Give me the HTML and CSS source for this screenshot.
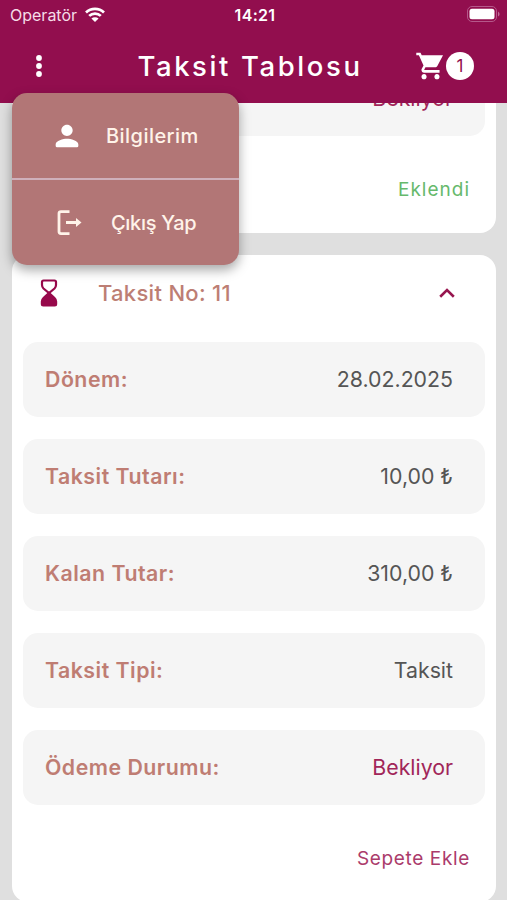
FILE: index.html
```html
<!DOCTYPE html>
<html lang="tr">
<head>
<meta charset="utf-8">
<title>Taksit Tablosu</title>
<link rel="stylesheet" href="styles.css">
</head>
<body>
<header class="header">
  <div class="status">
    <div class="carrier"><span>Operatör</span>
      <svg width="20" height="15" viewBox="0 0 20 15" fill="none" stroke="#fff" stroke-width="2.7"><path d="M1 5.500a13 13 0 0 1 18 0M4.200 8.900a8.300 8.300 0 0 1 11.600 0"/><path d="M6.400 11.600a5.200 5.200 0 0 1 7.200 0L10 15z" fill="#fff" stroke="none"/></svg>
    </div>
    <time class="clock">14:21</time>
    <svg class="battery" width="33" height="16" viewBox="0 0 33 16"><rect x=".5" y=".5" width="29" height="15" rx="4.5" fill="none" stroke="#b5588a"/><rect x="2.500" y="2.800" width="25" height="10.400" rx="2.500" fill="#fff"/><path d="M31 5.500q1.600 1 1.600 2.500T31 10.500z" fill="#c06c98"/></svg>
  </div>
  <div class="toolbar">
    <svg class="dots" width="8" height="24" viewBox="0 0 8 24" fill="#fff"><circle cx="4" cy="4" r="2.9"/><circle cx="4" cy="12" r="2.9"/><circle cx="4" cy="20" r="2.9"/></svg>
    <h1 class="title">Taksit Tablosu</h1>
    <div class="cart">
      <svg width="31" height="32" viewBox="0 0 24 24" preserveAspectRatio="none" fill="#fff"><path d="M7 18c-1.100 0-1.990.9-1.990 2S5.900 22 7 22s2-.9 2-2-.9-2-2-2zM1 2v2h2l3.600 7.590-1.350 2.450c-.16.28-.25.61-.25.96 0 1.100.9 2 2 2h12v-2H7.420c-.14 0-.25-.11-.25-.25l.03-.12.9-1.630h7.450c.75 0 1.410-.41 1.750-1.030L21.700 4H5.210l-.94-2H1zm16 16c-1.100 0-1.990.9-1.990 2s.89 2 1.990 2 2-.9 2-2-.9-2-2-2z"/></svg>
      <span class="count">1</span>
    </div>
  </div>
</header>
<nav class="menu">
  <a class="menu-item"><svg width="34" height="34" viewBox="0 0 24 24" fill="#fff"><path d="M12 12c2.210 0 4-1.790 4-4s-1.790-4-4-4-4 1.790-4 4 1.790 4 4 4zm0 2c-2.670 0-8 1.340-8 4v1q0 1 1 1h14q1 0 1-1v-1c0-2.660-5.330-4-8-4z"/></svg><span class="profile">Bilgilerim</span></a>
  <a class="menu-item"><svg width="34" height="34" viewBox="0 0 34 34" fill="none" stroke="#fff3e9" stroke-width="2.8"><path d="M19.500 5.600H11q-2 0-2 2V25.600q0 2 2 2h8.500M16 16.500H27"/><path d="M26 12l5.500 4.500-5.500 4.500z" fill="#fff3e9" stroke="none"/></svg><span class="logout">Çıkış Yap</span></a>
</nav>
<main class="list">
  <section class="card clipped">
    <div class="row"><b>Ödeme Durumu:</b><span class="pending">Bekliyor</span></div>
    <footer class="action added">Eklendi</footer>
  </section>
  <section class="card">
    <div class="card-head">
      <svg width="18" height="28" viewBox="0 0 18 28"><path d="M3.500 1.500h11q1.500 0 1.500 1.500v3q0 2-1.500 3.500L9 14 3.500 9.500Q2 8 2 6V3q0-1.500 1.500-1.500z" fill="none" stroke="#97094b" stroke-width="2.2"/><path d="M9 12.500l6 5.500q2.200 2 2.200 4.500V25q0 2.500-2.500 2.500H3.300Q.8 27.500.8 25v-2.500Q.8 20 3 18z" fill="#97094b"/></svg>
      <h2>Taksit No: 11</h2>
      <svg class="chevron" width="16" height="10" viewBox="0 0 16 10" fill="none" stroke="#97164f" stroke-width="2.600"><path d="M1.200 8.700L8 2l6.800 6.700"/></svg>
    </div>
    <div class="row"><b>Dönem:</b><span>28.02.2025</span></div>
    <div class="row"><b>Taksit Tutarı:</b><span>10,00 ₺</span></div>
    <div class="row"><b>Kalan Tutar:</b><span>310,00 ₺</span></div>
    <div class="row"><b>Taksit Tipi:</b><span>Taksit</span></div>
    <div class="row"><b>Ödeme Durumu:</b><span class="pending">Bekliyor</span></div>
    <footer class="action">Sepete Ekle</footer>
  </section>
</main>
</body>
</html>
```
FILE: styles.css
```css
* { box-sizing: border-box; }
body {
  margin: 0;
  height: 900px;
  overflow: hidden;
  position: relative;
  background: #dfdfdf;
  font-family: Inter, "Liberation Sans", sans-serif;
  display: flex;
  flex-direction: column;
}
svg { display: block; flex: none; }
.header { height: 103px; flex: none; background: #920e4e; color: #fff; }
.status {
  height: 29px;
  padding: 0 7px 0 10px;
  display: grid;
  grid-template-columns: 1fr auto 1fr;
  align-items: center;
}
.carrier { display: flex; align-items: center; gap: 8px; font-size: 16px; color: #f5dce8; }
.clock { font-size: 16px; font-weight: 600; letter-spacing: .3px; }
.battery { justify-self: end; margin-top: -2px; }
.toolbar {
  height: 74px;
  padding: 0 33px 0 35px;
  display: flex;
  align-items: center;
  justify-content: space-between;
}
.title { margin: 0 0 0 42px; font-size: 27.500px; font-weight: 500; letter-spacing: 2.6px; white-space: nowrap; }
.cart { display: flex; align-items: center; }
.count {
  width: 28px;
  height: 28px;
  border-radius: 50%;
  background: #fff;
  color: #920e4e;
  font-size: 17px;
  line-height: 28px;
  text-align: center;
}
.menu {
  position: absolute;
  z-index: 2;
  left: 12px;
  top: 93px;
  width: 227px;
  height: 172px;
  border-radius: 15px;
  overflow: hidden;
  background: #b27676;
  box-shadow: 0 5px 12px rgba(0, 0, 0, .35);
}
.menu-item {
  height: 85px;
  padding-left: 38px;
  display: flex;
  align-items: center;
  color: #fff3e9;
  font-size: 20px;
  font-weight: 500;
}
.menu-item + .menu-item { height: 87px; border-top: 2px solid #cfb0bb; }
.profile { margin-left: 22px; letter-spacing: .45px; }
.logout { margin-left: 27px; letter-spacing: -.3px; }
.list { flex: 1; min-height: 0; overflow: hidden; padding: 0 11px 0 12px; }
.card {
  padding: 0 11px;
  border-radius: 16px;
  background: #fff;
  display: flex;
  flex-direction: column;
  gap: 22px;
  margin-bottom: 22px;
}
.clipped { margin-top: -53px; padding-top: 11px; }
.card-head {
  height: 65px;
  padding: 11px 30px 0 17px;
  display: flex;
  align-items: center;
}
.card-head h2 { margin: 0 0 0 40px; color: #bd7e74; font-size: 22px; font-weight: 500; letter-spacing: .3px; }
.chevron { margin-left: auto; }
.row {
  height: 75px;
  padding: 0 32px 2px 22px;
  border-radius: 15px;
  background: #f5f5f5;
  display: flex;
  align-items: center;
  justify-content: space-between;
  color: #555;
  font-size: 21.3px;
}
.row b { color: #bf7d73; font-weight: 600; letter-spacing: .5px; }
.row .pending { color: #a12659; }
.action {
  height: 75px;
  padding: 0 15px 12px 0;
  display: flex;
  align-items: center;
  justify-content: flex-end;
  color: #ab3b6b;
  font-size: 19px;
  letter-spacing: .65px;
}
.added { color: #66b96c; letter-spacing: 1px; }
```
